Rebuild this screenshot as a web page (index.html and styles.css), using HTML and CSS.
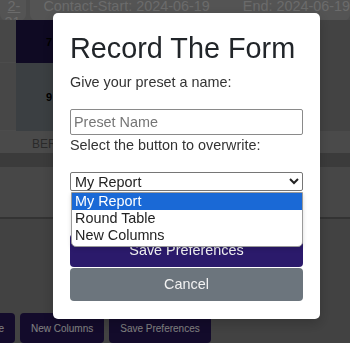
FILE: index.html
```html
<!DOCTYPE html>
<html lang="en">
<head>
    <meta charset="UTF-8">
    <meta name="viewport" content="width=device-width, initial-scale=1.0">
    <title>Record The Form</title>
    <link rel="stylesheet" href="styles.css">
</head>
<body>
    <div class="page">
        <div class="tabs">
            <div class="tab tab-first">2-31</div>
            <div class="tab tab-main">
                <span>Contact-Start: 2024-06-19</span>
                <span class="tab-end">End: 2024-06-19</span>
            </div>
        </div>
        <div class="report-table">
            <div class="cell-side"></div>
            <div class="cell cell-navy">7</div>
            <div class="cell-rest"></div>
            <div class="cell-side"></div>
            <div class="cell cell-slate">9</div>
            <div class="cell-rest"></div>
        </div>
        <div class="ber-row">BER</div>
        <div class="band"></div>
        <div class="area"></div>
        <div class="divider"></div>
        <div class="area-bottom">
            <div class="preset-buttons">
                <button class="preset-btn preset-cut">Round Table</button>
                <button class="preset-btn">New Columns</button>
                <button class="preset-btn">Save Preferences</button>
            </div>
        </div>
    </div>

    <div id="preset-modal">
        <div id="modal-content">
            <h3 class="modal-title">Record The Form</h3>
            <p class="modal-label">Give your preset a name:</p>
            <input type="text" class="preset-input" placeholder="Preset Name">
            <p class="modal-label">Select the button to overwrite:</p>
            <div class="select-wrap">
                <select class="preset-select">
                    <option>My Report</option>
                    <option>Round Table</option>
                    <option>New Columns</option>
                </select>
                <div class="select-list">
                    <div class="select-option active">My Report</div>
                    <div class="select-option">Round Table</div>
                    <div class="select-option">New Columns</div>
                </div>
            </div>
            <button class="modal-btn btn-save">Save Preferences</button>
            <button class="modal-btn btn-cancel">Cancel</button>
        </div>
    </div>
</body>
</html>
```

FILE: styles.css
```css
body {
    font-family: "Liberation Sans", Arial, sans-serif;
    font-size: 14.4px;
    margin: 0;
    padding: 0;
    background-color: #888;
    overflow: hidden;
}
.page {
    display: flex;
    flex-direction: column;
    height: 343px;
}
.tabs {
    display: flex;
    height: 21px;
    background-color: #9a9a9a;
    overflow: hidden;
}
.tab {
    background-color: #a8a8a8;
    border-radius: 0 0 7px 7px;
    color: #d6d6d6;
    font-size: 14.4px;
    line-height: 16px;
    margin-top: -2px;
    height: 23px;
}
.tab-first {
    width: 36px;
    padding-right: 6px;
    box-sizing: border-box;
    text-align: right;
    text-decoration: underline;
}
.tab-main {
    margin-left: 4px;
    padding-left: 13px;
    flex: 1;
    white-space: nowrap;
}
.tab-end {
    margin-left: 29px;
}
.report-table {
    display: grid;
    grid-template-columns: 16px 150px 1fr;
    grid-template-rows: 43px 68px;
}
.cell-side {
    background-color: #8e8e8e;
    border-bottom: 1px solid #999;
}
.cell-rest {
    background-color: #868686;
}
.cell {
    font-size: 11px;
    font-weight: bold;
    color: #000;
    padding-left: 30px;
    display: flex;
    align-items: center;
}
.cell-navy {
    background-color: #1e1446;
}
.cell-slate {
    background-color: #767e84;
}
.ber-row {
    height: 22px;
    background-color: #949494;
    color: #555;
    font-size: 12px;
    line-height: 26px;
    padding-left: 32px;
}
.band {
    height: 14px;
    background-color: #767676;
}
.area {
    height: 52px;
    background-color: #8e8e8e;
}
.divider {
    height: 2px;
    background-color: #666;
}
.area-bottom {
    flex: 1;
    background-color: #848484;
    padding-top: 94px;
}
.preset-buttons {
    display: flex;
    gap: 5px;
    margin-left: -63px;
}
.preset-btn {
    font-family: "Liberation Sans", Arial, sans-serif;
    font-size: 10px;
    color: #fff;
    background-color: #261656;
    border: none;
    border-radius: 4px;
    height: 30px;
    padding: 0 11px;
    white-space: nowrap;
}
#preset-modal {
    position: fixed;
    top: 0;
    left: 0;
    width: 100%;
    height: 100%;
    background: rgba(0, 0, 0, 0.5);
    display: flex;
    align-items: flex-start;
}
#modal-content {
    margin: 13px 0 0 53px;
    width: 267px;
    box-sizing: border-box;
    background: #fff;
    padding: 18px 17px;
    border-radius: 5px;
    box-shadow: 0 4px 12px rgba(0, 0, 0, 0.2);
    color: #212529;
}
.modal-title {
    margin: 0 0 6px;
    font-size: 28.8px;
    font-weight: 500;
    line-height: 1.2;
}
.modal-label {
    margin: 0;
    font-size: 14.4px;
    line-height: 1.5;
    color: #333;
}
.preset-input {
    display: block;
    width: 100%;
    box-sizing: border-box;
    height: 26px;
    margin: 16px 0 0;
    padding: 3px;
    font-family: "Liberation Sans", Arial, sans-serif;
    font-size: 14.4px;
    border: 1px solid #8a8a8a;
    border-radius: 2px;
}
.preset-input::placeholder {
    color: #757575;
}
.select-wrap {
    position: relative;
    margin: 15px 0 43px;
}
.preset-select {
    display: block;
    width: 100%;
    height: 19px;
    font-family: "Liberation Sans", Arial, sans-serif;
    font-size: 14.4px;
    color: #222;
    padding: 0;
    border: 1px solid #767676;
    border-radius: 2px;
    background: #fff;
}
.select-list {
    position: absolute;
    top: calc(100% + 1px);
    left: 1px;
    right: 0;
    background: #fff;
    border: 1px solid #9a9a9a;
    border-radius: 0 0 5px 5px;
    padding-bottom: 2px;
    box-shadow: 0 2px 4px rgba(0, 0, 0, 0.15);
    z-index: 2;
}
.select-option {
    font-size: 14.4px;
    line-height: 17px;
    padding: 0 3px;
    color: #222;
}
.select-option.active {
    background-color: #1a69d6;
    color: #fff;
}
.modal-btn {
    display: block;
    width: 100%;
    height: 33px;
    border: none;
    border-radius: 4px;
    font-family: "Liberation Sans", Arial, sans-serif;
    font-size: 14.4px;
    color: #f2f2f2;
}
.btn-save {
    background-color: #2b1a6b;
    margin-bottom: 1px;
}
.btn-cancel {
    background-color: #6c757d;
}
```
